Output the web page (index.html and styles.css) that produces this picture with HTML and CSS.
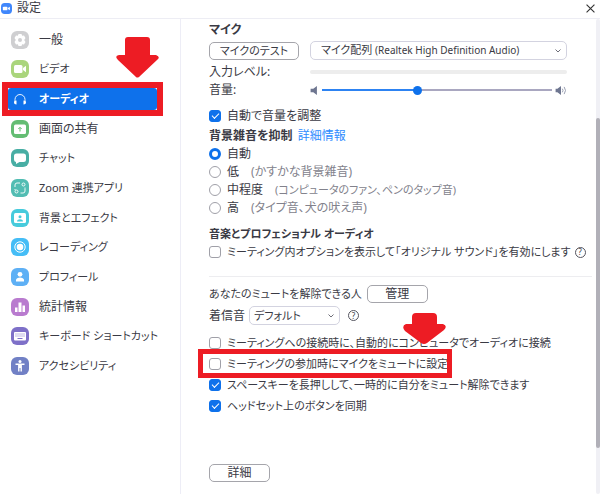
FILE: index.html
```html
<!DOCTYPE html>
<html lang="ja">
<head>
  <meta charset="UTF-8">
  <meta name="viewport" content="width=device-width, initial-scale=1.0">
  <title>設定</title>
  <link rel="stylesheet" href="styles.css">
</head>
<body>
  <header class="titlebar">
    <svg class="app-logo" viewBox="0 0 12 12"><rect width="12" height="12" rx="4" fill="#4087fc"/><rect x="2" y="4" width="5" height="4" rx="1" fill="#fff"/><path d="M7.5 5.5L9.7 4v4L7.5 6.5z" fill="#fff"/></svg>
    <h1>設定</h1>
    <button class="close" aria-label="閉じる"><svg viewBox="0 0 8 8"><path d="M.5.5l7 7M7.5.5l-7 7" stroke="#333" fill="none"/></svg></button>
  </header>

  <div class="window">
    <nav class="sidebar">
      <a href="#general"><svg class="icon" viewBox="0 0 18 18"><rect width="18" height="18" rx="6" fill="#cfcfd1"/><path d="M7.500 3h3l.6 1.800 1.900-.3 1.500 2.600L13.200 9l1.300 1.900-1.500 2.600-1.900-.3-.6 1.800h-3l-.6-1.800-1.900.3-1.500-2.600L4.800 9 3.500 7.100 5 4.500l1.900.3z" fill="#fff"/><circle cx="9" cy="9" r="2" fill="#cfcfd1"/></svg>一般</a>
      <a href="#video" class="kana"><svg class="icon" viewBox="0 0 18 18"><rect width="18" height="18" rx="6" fill="#aad57c"/><rect x="3" y="5" width="8.500" height="8" rx="1.500" fill="#fff"/><path d="M12 8l3-2.300v6.600L12 10z" fill="#fff"/></svg>ビデオ</a>
      <a href="#audio" class="kana active"><svg class="icon" viewBox="0 0 18 18"><path d="M4 12.500V9.500a5 5 0 0 1 10 0v3" fill="none" stroke="#fff" stroke-width=".9"/><path d="M5.500 10.500v4C4 14.500 3 13.700 3 12.500s1-2 2.500-2zM12.500 10.500v4c1.500 0 2.500-.8 2.500-2s-1-2-2.500-2z" fill="#fff"/></svg>オーディオ</a>
      <a href="#share"><svg class="icon" viewBox="0 0 18 18"><rect width="18" height="18" rx="6" fill="#64bd73"/><rect x="3" y="4.500" width="12" height="9.500" rx="1.500" fill="#fff"/><path d="M9 11.500V7.500M7.300 9L9 7.300 10.700 9" stroke="#64bd73" fill="none"/></svg>画面の共有</a>
      <a href="#chat" class="kana"><svg class="icon" viewBox="0 0 18 18"><rect width="18" height="18" rx="6" fill="#48aea4"/><path d="M5.500 4.500h7A2.500 2.500 0 0 1 15 7v3.500a2.500 2.500 0 0 1-2.500 2.500H8.500L5 15v-2a2.500 2.500 0 0 1-2-2.500V7a2.500 2.500 0 0 1 2.500-2.500z" fill="#fff"/></svg>チャット</a>
      <a href="#apps" class="kana"><svg class="icon" viewBox="0 0 18 18"><rect width="18" height="18" rx="6" fill="#52bdb3"/><g fill="none" stroke="#fff" stroke-width=".9"><path d="M4 8V6a2 2 0 0 1 2-2h3M14 9.500V12a2 2 0 0 1-2 2H9.500M14 8.500v1M4 10v1"/><circle cx="12.500" cy="5.500" r="1.500"/><circle cx="5.500" cy="12.500" r="1.500"/></g></svg>Zoom 連携アプリ</a>
      <a href="#background" class="kana"><svg class="icon" viewBox="0 0 18 18"><rect width="18" height="18" rx="6" fill="#47cbdc"/><rect x="3" y="4" width="12" height="10" rx="1.500" fill="#fff"/><circle cx="9" cy="7.800" r="1.500" fill="#47cbdc"/><path d="M6 12.500c0-3 6-3 6 0z" fill="#47cbdc"/></svg>背景とエフェクト</a>
      <a href="#recording" class="kana"><svg class="icon" viewBox="0 0 18 18"><rect width="18" height="18" rx="6" fill="#45bdf6"/><circle cx="9" cy="9" r="5.200" fill="none" stroke="#fff"/><circle cx="9" cy="9" r="3.300" fill="#fff"/></svg>レコーディング</a>
      <a href="#profile" class="kana"><svg class="icon" viewBox="0 0 18 18"><rect width="18" height="18" rx="6" fill="#5eb0f5"/><circle cx="9" cy="6.300" r="2.400" fill="#fff"/><path d="M5 13.500V12c0-3.500 8-3.500 8 0v1.500z" fill="#fff"/></svg>プロフィール</a>
      <a href="#stats"><svg class="icon" viewBox="0 0 18 18"><rect width="18" height="18" rx="6" fill="#b97bcf"/><path d="M4 9.500h2.500V14H4zM7.500 4.500h3V14h-3zM11.500 7.500H14V14h-2.500z" fill="#fff"/></svg>統計情報</a>
      <a href="#keyboard" class="kana"><svg class="icon" viewBox="0 0 18 18"><rect width="18" height="18" rx="6" fill="#7e70c8"/><rect x="3" y="5" width="12" height="8.500" rx="1" fill="#fff"/><path d="M4.500 7h9M4.500 9h9" stroke="#7e70c8" stroke-dasharray="1 1" fill="none"/><path d="M6.500 11.500h5" stroke="#7e70c8"/></svg>キーボード ショートカット</a>
      <a href="#accessibility" class="kana"><svg class="icon" viewBox="0 0 18 18"><rect width="18" height="18" rx="6" fill="#7180c5"/><circle cx="9" cy="4.500" r="1.500" fill="#fff"/><path d="M4.500 7.300h9M9 7v4M7.800 7.300v7.200M10.200 7.300v7.200" stroke="#fff" stroke-width="1.400" fill="none"/></svg>アクセシビリティ</a>
    </nav>

    <main class="content">
      <h2>マイク</h2>
      <section class="mic">
        <button class="btn">マイクのテスト</button>
        <div class="select">
          <select class="device" aria-label="マイク">
            <button><selectedcontent></selectedcontent></button>
            <option selected>マイク配列 <small>(Realtek High Definition Audio)</small></option>
          </select>
          <svg viewBox="0 0 6 4"><path d="M.5.5L3 3 5.5.5"/></svg>
        </div>
        <span>入力レベル:</span>
        <div class="level"></div>
        <label for="volume">音量:</label>
        <div class="volume">
          <svg viewBox="0 0 12 10"><path d="M0 3h3l4-3v10L3 7H0z" fill="#6e7690"/></svg>
          <input type="range" id="volume" min="0" max="100" value="41">
          <svg viewBox="0 0 12 10"><path d="M0 3h2l4-3v10L2 7H0z" fill="#6e7690"/><path d="M7.500 3q1.500 2 0 4M9.500 1q3 4 0 8" stroke="#8f95aa" fill="none"/></svg>
        </div>
      </section>

      <label class="row auto-volume"><input type="checkbox" checked>自動で音量を調整</label>

      <h2>背景雑音を抑制 <a href="#details">詳細情報</a></h2>
      <label class="row"><input type="radio" name="noise" checked>自動</label>
      <label class="row"><input type="radio" name="noise">低<span class="note">(かすかな背景雑音)</span></label>
      <label class="row"><input type="radio" name="noise">中程度<span class="note kana">(コンピュータのファン、ペンのタップ音)</span></label>
      <label class="row"><input type="radio" name="noise">高<span class="note">(タイプ音、犬の吠え声)</span></label>

      <h2 class="music kana">音楽とプロフェショナル オーディオ</h2>
      <div class="row">
        <label class="row kana"><input type="checkbox">ミーティング内オプションを表示して「オリジナル サウンド」を有効にします</label>
        <button class="help" aria-label="ヘルプ">?</button>
      </div>

      <hr>

      <div class="row people">
        <span class="kana">あなたのミュートを解除できる人</span>
        <button class="btn manage">管理</button>
      </div>
      <div class="row ring">
        <label for="ringtone">着信音</label>
        <div class="select ringtone">
          <select id="ringtone" class="kana"><option>デフォルト</option></select>
          <svg viewBox="0 0 6 4"><path d="M.5.5L3 3 5.5.5"/></svg>
        </div>
        <button class="help" aria-label="ヘルプ">?</button>
      </div>

      <div class="options kana">
        <label class="row"><input type="checkbox">ミーティングへの接続時に、自動的にコンピュータでオーディオに接続
          <svg class="arrow" viewBox="0 0 43 31"><path d="M13 0h17q4 0 4 4v7h6q5 2 1 6L24 30q-3 2-6 0L2 18q-4-5 1-7h6V4q0-4 4-4z" fill="#ed1c24"/></svg>
        </label>
        <label class="row marked"><input type="checkbox">ミーティングの参加時にマイクをミュートに設定</label>
        <label class="row"><input type="checkbox" checked>スペースキーを長押しして、一時的に自分をミュート解除できます</label>
        <label class="row"><input type="checkbox" checked>ヘッドセット上のボタンを同期</label>
      </div>

      <button class="btn advanced">詳細</button>
    </main>
    <div class="scrollbar"><div class="thumb"></div></div>
  </div>
  <svg class="arrow arrow-audio" viewBox="0 0 43 41"><path d="M12 0h19q3 0 3 3v15h6q5 2 1 5L23 40q-2 1-3 0L2 23q-4-4 1-5h6V3q0-3 3-3z" fill="#ed1c24"/></svg>
</body>
</html>
```
FILE: styles.css
```css
*,
*::before,
*::after {
  box-sizing: border-box;
}
body {
  margin: 0;
  min-height: 100vh;
  display: flex;
  flex-direction: column;
  position: relative;
  background: #fff;
  color: #3a3a44;
  font-family: "Noto Sans", "Noto Sans CJK JP", sans-serif;
  font-size: 12px;
  line-height: 18px;
  font-feature-settings: "palt";
  white-space: nowrap;
}
button,
input,
select {
  font: inherit;
  color: inherit;
  font-feature-settings: inherit;
  margin: 0;
  padding: 0;
}
a {
  text-decoration: none;
  color: #2d8cff;
}

/* title bar */
.titlebar {
  display: flex;
  align-items: center;
  gap: 5px;
  height: 19px;
  padding: 0 5px 2px 1px;
  border-bottom: 1px solid #ededf4;
}
.titlebar h1 {
  margin: 0;
  font-size: 12px;
  font-weight: 400;
}
.app-logo {
  width: 11px;
  height: 11px;
}
.close {
  margin-left: auto;
  border: 0;
  background: none;
  display: flex;
}
.close svg {
  width: 9px;
  height: 9px;
}

.window {
  display: flex;
  flex: 1;
}

/* sidebar */
.sidebar {
  width: 181px;
  flex: none;
  padding: 6px 23px 113px 8px;
  border-right: 1px solid #ededf6;
  display: grid;
  grid-template-columns: minmax(0, 1fr);
  grid-auto-rows: 1fr;
}
.sidebar a {
  display: flex;
  align-items: center;
  align-self: center;
  gap: 10px;
  height: 22px;
  padding-left: 3px;
  color: #3a3a44;
}
.sidebar .active {
  position: relative;
  background: #0e71eb;
  border-radius: 3px;
  color: #fff;
  font-weight: 700;
}
.sidebar .active::after {
  content: "";
  position: absolute;
  inset: -6px;
  border: 6px solid #ed1c24;
}
.icon {
  width: 18px;
  height: 18px;
  flex: none;
}

/* settings */
.content {
  flex: 1;
  min-width: 0;
  padding: 2px 4px 12px 28px;
}
.content h2 {
  margin: 0;
  font-size: 12px;
  font-weight: 700;
}
.content h2 a {
  font-weight: 400;
  margin-left: 2px;
}
.kana,
.content .kana {
  font-size: 11px;
}
.mic {
  display: grid;
  grid-template-columns: 90px 1fr;
  column-gap: 11px;
  align-items: center;
  margin: 2px 25px 0 0;
}
.btn {
  height: 18px;
  border: 1px solid #a5a5ab;
  border-radius: 5px;
  background: #fff;
  line-height: 14px;
}
.mic .btn {
  font-size: 11px;
}
.select {
  position: relative;
  display: flex;
  align-items: center;
}
.select select {
  appearance: none;
  width: 100%;
  height: 19px;
  padding: 0 18px 0 10px;
  border: 1px solid #d3d3e0;
  border-radius: 5px;
  background: #fff;
  line-height: 16px;
}
.select .device {
  appearance: base-select;
  min-height: 0;
  font-size: 11px;
}
.device::picker-icon {
  display: none;
}
.device small {
  font-size: 10px;
}
.select svg {
  position: absolute;
  right: 6px;
  width: 6px;
  height: 4px;
  fill: none;
  stroke: #6e6e78;
  pointer-events: none;
}
.mic .btn,
.mic .select {
  margin-bottom: 3px;
}
.level {
  height: 4px;
  border-radius: 2px;
  background: #ededed;
}
.volume {
  display: flex;
  align-items: center;
}
.volume svg {
  width: 12px;
  height: 9px;
  flex: none;
}
.volume input {
  appearance: none;
  flex: 1;
  min-width: 0;
  height: 9px;
  margin-right: 3px;
  background: linear-gradient(90deg, #2d83f2 41%, #a9a7c0 41%) center / 100% 2px no-repeat;
}
.volume input::-webkit-slider-thumb {
  appearance: none;
  width: 9px;
  height: 9px;
  border-radius: 50%;
  background: #0e71eb;
}

.row {
  display: flex;
  align-items: center;
}
.row input {
  appearance: none;
  flex: none;
  width: 12px;
  height: 12px;
  margin-right: 6px;
  border: 1px solid #a0a0a8;
  border-radius: 3px;
  background: #fff;
}
.row input[type="radio"] {
  border-radius: 50%;
}
.row input[type="radio"]:checked {
  border: 3px solid #0e71eb;
}
.row input[type="checkbox"]:checked {
  display: grid;
  place-items: center;
  border-color: #0e71eb;
  background: #0e71eb;
}
.row input[type="checkbox"]:checked::before {
  content: "";
  width: 7px;
  height: 4px;
  border: solid #fff;
  border-width: 0 0 1px 1px;
  transform: translateY(-1px) rotate(-45deg);
}
.auto-volume {
  margin-top: 8px;
  margin-bottom: 2px;
}
.note {
  margin-left: 12px;
  color: #82828c;
}
.content .music {
  margin-top: 8px;
}
.help {
  flex: none;
  width: 11px;
  height: 11px;
  margin-left: 4px;
  border: 1px solid #55555f;
  border-radius: 50%;
  background: none;
  font-size: 8px;
  line-height: 8px;
}
hr {
  margin: 15px 0 8px;
  border: 0;
  border-top: 1px solid #ededf0;
}
.people {
  gap: 5px;
}
.manage {
  width: 61px;
}
.ring {
  margin-top: 3px;
  gap: 4px;
}
.ringtone {
  width: 91px;
}
.ringtone select {
  padding: 0 14px 0 4px;
}
.options {
  margin-top: 7px;
}
.options .row {
  position: relative;
  height: 21px;
}
.marked::after {
  content: "";
  position: absolute;
  left: -11px;
  top: -4px;
  width: 254px;
  height: 29px;
  border: 5px solid #ed1c24;
}
.advanced {
  width: 61px;
  margin-top: 48px;
}

/* pointers */
.arrow {
  position: absolute;
  left: 194px;
  top: -19px;
  width: 43px;
  height: 31px;
}
.arrow-audio {
  left: 116px;
  top: 37px;
  height: 41px;
}

.scrollbar {
  width: 4px;
  padding-top: 99px;
  background: #f0f0f5;
  border-radius: 2px;
}
.thumb {
  height: 330px;
  border-radius: 2px;
  background: #b1b0b8;
}
```
